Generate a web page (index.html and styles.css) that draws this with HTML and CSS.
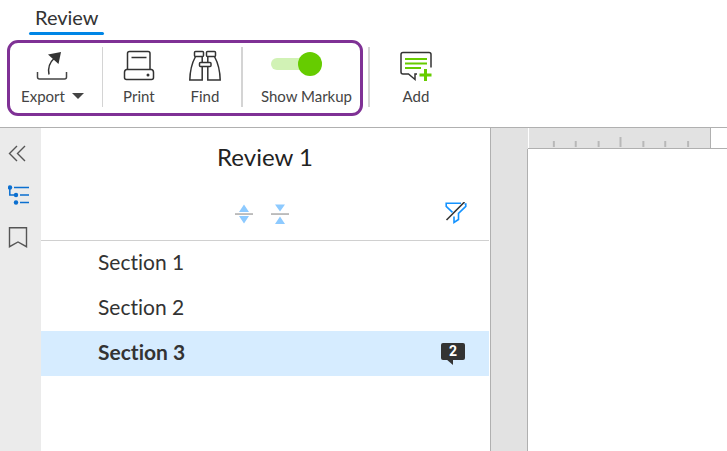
FILE: index.html
```html
<!DOCTYPE html>
<html lang="en">
<head>
<meta charset="utf-8">
<meta name="viewport" content="width=device-width, initial-scale=1">
<title>Review</title>
<link rel="stylesheet" href="styles.css">
</head>
<body>
<header class="header">
  <nav class="tabs"><a class="tab" href="#review">Review</a></nav>
  <div class="ribbon">
    <div class="group">
      <button class="tool tool-export" type="button">
        <svg class="icon" width="32" height="32" viewBox="0 0 32 32" fill="none" stroke="#333" stroke-width="1.5">
          <path d="M1.500 22v5q0 2 2 2h25q2 0 2-2v-5" stroke="#444"/>
          <path d="M13 24.500C11.500 17 14 12 18.500 8"/>
          <path d="M12 4.500 25 2 22.500 14Z" fill="#333" stroke="none"/>
        </svg>
        <span class="label">Export<span class="caret"></span></span>
      </button>
      <span class="rule rule-thin"></span>
      <button class="tool tool-print" type="button">
        <svg class="icon" width="32" height="32" viewBox="0 0 32 32" fill="none" stroke="#333" stroke-width="1.5">
          <path d="M4.500 19.500V3.500q0-2 2-2h18.500q2 0 2 2v16"/>
          <path d="M8.500 7.500h15"/>
          <path d="M3.500 19.500h25q2 .5 2 3v5q0 2-2 2H3.500q-2 0-2-2v-5q0-2.500 2-3Z"/>
          <circle cx="25" cy="25" r="1.500" fill="#333" stroke="none"/>
        </svg>
        <span class="label">Print</span>
      </button>
      <button class="tool tool-find" type="button">
        <svg class="icon" width="32" height="32" viewBox="0 0 32 32" fill="none" stroke="#333" stroke-width="1.500">
          <rect x="5.500" y="1.500" width="9" height="5" rx="1"/>
          <rect x="17.500" y="1.500" width="9" height="5" rx="1"/>
          <path d="M6.500 6.500C3 13 1 20 .8 30h12.400V17M13.200 12V6.500M25.500 6.500C29 13 31 20 31.200 30H18.800V17M18.800 12V6.500"/>
          <rect x="10.500" y="12.500" width="11.500" height="4" rx="1"/>
        </svg>
        <span class="label">Find</span>
      </button>
      <span class="rule"></span>
      <label class="tool tool-markup">
        <input class="switch" type="checkbox" role="switch" checked>
        <span class="label">Show Markup</span>
      </label>
    </div>
    <span class="rule rule-outer"></span>
    <button class="tool tool-add" type="button">
      <svg class="icon" width="34" height="32" viewBox="0 0 34 32" fill="none" stroke="#333" stroke-width="1.500">
        <path d="M32 17.500V4.500q0-2-2-2H4q-2 0-2 2v17.500q0 2 2 2h5.500l6.500 5.500V24h2"/>
        <path d="M6 9h22M6 13.500h22M6 18h16" stroke="#6c0" stroke-width="2"/>
        <path d="M20.500 25h12M26.500 19v12" stroke="#6c0" stroke-width="3"/>
      </svg>
      <span class="label">Add</span>
    </button>
  </div>
</header>
<main class="workspace">
  <aside class="rail">
    <button class="rail-button" type="button" aria-label="Collapse panel">
      <svg width="20" height="20" viewBox="0 0 20 20" fill="none" stroke="#555" stroke-width="1.400"><path d="M9 3 1.500 10.500 9 18M17 3 9.500 10.500 17 18"/></svg>
    </button>
    <button class="rail-button" type="button" aria-label="Outline">
      <svg width="22" height="22" viewBox="0 0 22 22" fill="none" stroke="#0b6fd0" stroke-width="1.500"><path d="M1.800 3v8h6M6 3.500h15M12 11h9M12 18.500h9"/><g fill="#0b6fd0" stroke="none"><circle cx="2" cy="3.500" r="2.200"/><circle cx="8" cy="11" r="2.200"/><circle cx="8" cy="18.500" r="2.200"/></g></svg>
    </button>
    <button class="rail-button" type="button" aria-label="Bookmarks">
      <svg width="20" height="22" viewBox="0 0 20 22" fill="none" stroke="#555" stroke-width="1.400"><path d="M1.500 .7h17v19L10 15l-8.500 4.700Z"/></svg>
    </button>
  </aside>
  <section class="panel">
    <h1 class="title">Review 1</h1>
    <div class="actions">
      <button class="plain" type="button" aria-label="Expand all">
        <svg width="18" height="20" viewBox="0 0 18 20" fill="#8dcaff"><path d="M9 .5 14 8H4ZM4 12h10L9 19.500Z"/><path d="M0 9.300h18v1.500H0z" fill="#aaa"/></svg>
      </button>
      <button class="plain" type="button" aria-label="Collapse all">
        <svg width="18" height="20" viewBox="0 0 18 20" fill="#8dcaff"><path d="M4 .5h10L9 7.500ZM9 12.500 14 20H4Z"/><path d="M0 9.300h18v1.500H0z" fill="#aaa"/></svg>
      </button>
      <button class="plain filter" type="button" aria-label="Clear filter">
        <svg width="24" height="24" viewBox="0 0 24 24" fill="none" stroke="#1593ff" stroke-width="1.600"><path d="M17 1.300H2.200v3l6.300 6M20.500 2h1.300v2.300l-7.300 7V17.500l-4.500 3v-6"/><path d="M2.500 18 20.500 0" stroke="#333"/></svg>
      </button>
    </div>
    <ul class="sections">
      <li><a class="row" href="#section-1">Section 1</a></li>
      <li><a class="row" href="#section-2">Section 2</a></li>
      <li><a class="row selected" href="#section-3">Section 3<span class="badge">2</span></a></li>
    </ul>
  </section>
  <div class="gutter"></div>
  <section class="document">
    <div class="ruler">
      <svg width="182" height="20" viewBox="0 0 182 20" fill="#b8b8b8"><path d="M24 13h2v6h-2zM46 13h2v6h-2zM69 13h2v6h-2zM91 9h2v10h-2zM114 13h2v6h-2zM136 13h2v6h-2zM159 13h2v6h-2z"/></svg>
    </div>
    <div class="page"></div>
  </section>
</main>
</body>
</html>
```
FILE: styles.css
```css
* { box-sizing: border-box; }
body {
  margin: 0;
  min-height: 100vh;
  display: flex;
  flex-direction: column;
  background: #fff;
  color: #333;
  font-family: Lato, "Liberation Sans", sans-serif;
  font-variant-ligatures: none;
}
button {
  margin: 0;
  padding: 0;
  border: 0;
  background: none;
  color: inherit;
  font: inherit;
}
a { color: inherit; text-decoration: none; }
svg { display: block; }

.header { padding-bottom: 11px; border-bottom: 1px solid #b0b0b0; }
.tabs { display: flex; padding-left: 29px; }
.tab {
  position: relative;
  padding: 5px 5px 6px 6px;
  font-size: 20px;
  line-height: 24px;
}
.tab::after {
  content: "";
  position: absolute;
  left: 0;
  right: 0;
  bottom: 0;
  height: 3px;
  border-radius: 2px;
  background: #0086e6;
}
.ribbon { display: flex; padding: 5px 0 0 7px; }
.group {
  display: flex;
  height: 76px;
  padding-top: 4px;
  border: 3px solid #7f3195;
  border-radius: 11px;
}
.tool {
  display: flex;
  flex-direction: column;
  align-items: center;
  padding-top: 3px;
}
.label {
  display: flex;
  align-items: center;
  margin-top: 4px;
  font-size: 15px;
  line-height: 20px;
  color: #444;
  white-space: nowrap;
}
.caret {
  margin-left: 7px;
  border: 6px solid transparent;
  border-top-color: #444;
  border-bottom-width: 0;
}
.tool-export { padding-left: 11px; padding-right: 18px; }
.tool-print { width: 72px; }
.tool-find { width: 60px; margin-right: 6px; }
.tool-markup { padding-left: 18px; padding-right: 8px; }
.tool-add { margin-left: 29px; padding-top: 10px; }
.rule { width: 2px; height: 60px; background: #d4d4d4; }
.rule-thin { width: 1px; }
.rule-outer { margin: 7px 0 0 5px; }
.switch {
  appearance: none;
  align-self: flex-start;
  display: flex;
  align-items: center;
  justify-content: flex-end;
  width: 51px;
  height: 12px;
  margin: 8px 0 12px 10px;
  border-radius: 6px;
  background: #d1f2b5;
}
.switch::before {
  content: "";
  flex: none;
  width: 24px;
  height: 24px;
  border-radius: 50%;
  background: #6c0;
}

.workspace { flex: 1; display: flex; }
.rail {
  width: 41px;
  padding: 15px 0 0 8px;
  background: #ebebeb;
  display: flex;
  flex-direction: column;
  align-items: flex-start;
  gap: 21px;
}
.panel { flex: 0 1 448px; }
.title {
  margin: 0;
  padding-top: 13px;
  font-size: 24px;
  line-height: 32px;
  font-weight: 400;
  text-align: center;
  color: #222;
}
.actions {
  display: grid;
  grid-template-columns: 1fr 18px 18px 1fr;
  column-gap: 18px;
  align-items: center;
  height: 68px;
  padding: 14px 21px 0 15px;
  border-bottom: 1px solid #d0d0d0;
}
.actions .plain:first-child { grid-column: 2; }
.actions .filter { justify-self: end; }
.sections { margin: 0; padding: 0; list-style: none; }
.row {
  display: flex;
  align-items: center;
  justify-content: space-between;
  height: 45px;
  padding: 0 24px 5px 57px;
  font-size: 21px;
}
.selected { background: #d6ecff; font-weight: 700; }
.badge {
  position: relative;
  width: 24px;
  height: 17px;
  border-radius: 2px;
  background: #333;
  color: #fff;
  font: 700 14px/17px Roboto, sans-serif;
  text-align: center;
}
.badge::after {
  content: "";
  position: absolute;
  left: 5px;
  top: 16px;
  border-top: 6px solid #333;
  border-left: 7px solid transparent;
}
.gutter {
  width: 38px;
  margin-left: 1px;
  border: 1px solid #b0b0b0;
  border-width: 0 0 0 1px;
  background: #e2e2e2;
}
.document { flex: 1; display: flex; flex-direction: column; min-width: 0; }
.ruler {
  height: 21px;
  padding-left: 1px;
  border-bottom: 1px solid #b0b0b0;
}
.ruler svg {
  background: #e2e2e2;
  border-right: 1px solid #b0b0b0;
}
.page { flex: 1; border-left: 1px solid #b0b0b0; margin-left: -1px; }
```
